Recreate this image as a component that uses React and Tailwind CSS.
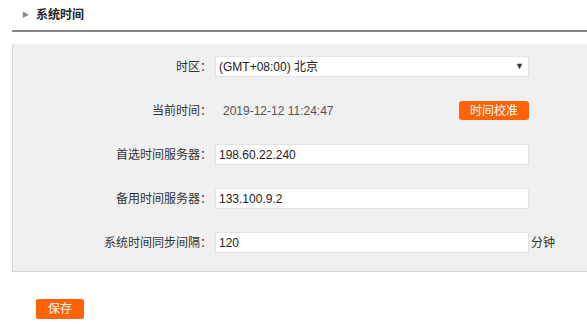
const font = { fontFamily: '"Liberation Sans", "Noto Sans CJK SC", sans-serif' };

function Row({ label, children }) {
  return (
    <div className="flex items-center h-[21px]">
      <div className="w-[199px] text-right text-[12px] text-[#333]">{label}</div>
      <div className="ml-[3px] flex items-center">{children}</div>
    </div>
  );
}

function TextInput({ value }) {
  return (
    <div className="w-[314px] h-[21px] bg-white border border-[#e3e3e3] flex items-center px-[3px] text-[12px] text-[#222]">
      {value}
    </div>
  );
}

export default function App() {
  return (
    <div className="w-[587px] h-[325px] bg-white" style={font}>
      <div className="h-[30px] flex items-center pl-[22px]">
        <span className="text-[7px] text-[#888] mr-[7px]">▶</span>
        <span className="text-[12px] font-bold text-[#222]">系统时间</span>
      </div>
      <div className="ml-[12px] h-[2px] bg-[#888]" />
      <div className="ml-[12px] mt-[12px] bg-[#f0f0f0] border-l border-b border-[#d6d6d6] pt-[12px] pb-[18px] flex flex-col gap-[23px]">
        <Row label="时区：">
          <div className="w-[314px] h-[21px] bg-white border border-[#e3e3e3] flex items-center justify-between px-[3px] text-[12px] text-[#222]">
            <span>(GMT+08:00) 北京</span>
            <span className="text-[9px] text-[#333] mr-[1px]">▼</span>
          </div>
        </Row>
        <Row label="当前时间：">
          <div className="w-[314px] flex items-center justify-between">
            <span className="pl-[8px] text-[12px] text-[#555]">2019-12-12 11:24:47</span>
            <button className="w-[70px] h-[19px] rounded-[3px] bg-[#ff6308] text-white text-[12px] leading-none">
              时间校准
            </button>
          </div>
        </Row>
        <Row label="首选时间服务器：">
          <TextInput value="198.60.22.240" />
        </Row>
        <Row label="备用时间服务器：">
          <TextInput value="133.100.9.2" />
        </Row>
        <Row label="系统时间同步间隔：">
          <TextInput value="120" />
          <span className="ml-[2px] text-[12px] text-[#333]">分钟</span>
        </Row>
      </div>
      <div className="pl-[36px] pt-[24px]">
        <button className="w-[48px] h-[20px] rounded-[2px] bg-[#ff6308] text-white text-[12px] leading-none">
          保存
        </button>
      </div>
    </div>
  );
}
